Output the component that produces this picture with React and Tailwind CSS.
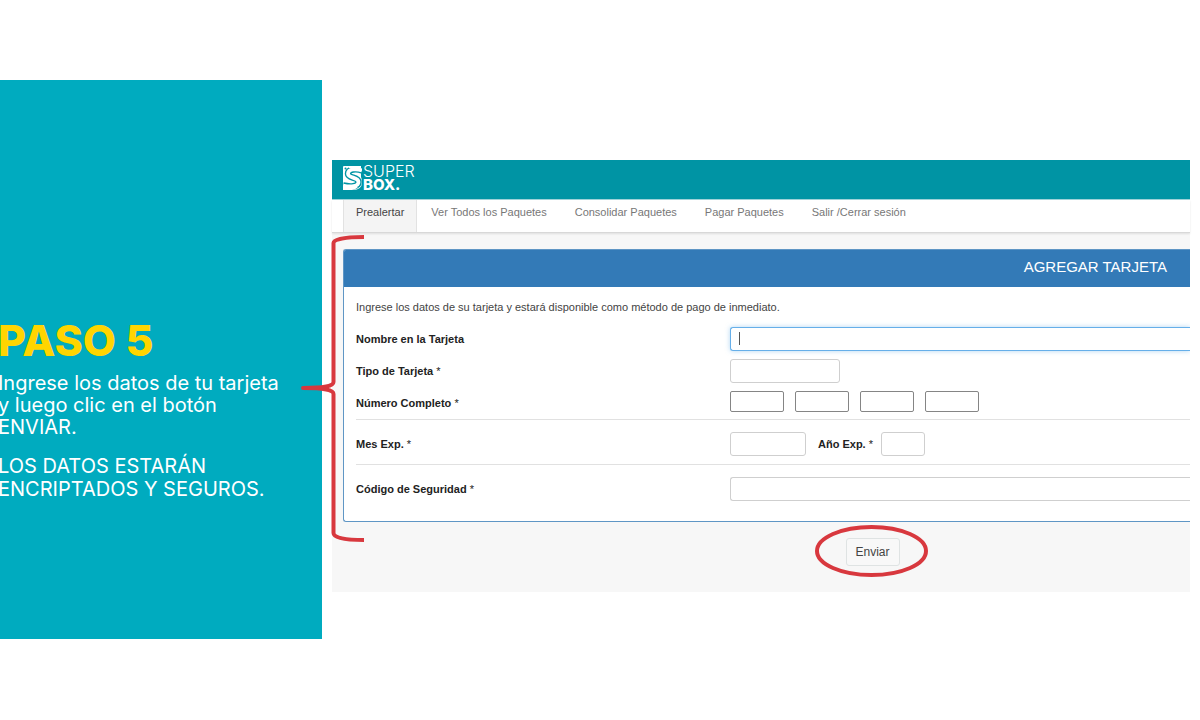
import { useState } from "react";

const navItems = [
  "Prealertar",
  "Ver Todos los Paquetes",
  "Consolidar Paquetes",
  "Pagar Paquetes",
  "Salir /Cerrar sesión",
];

const fieldClass = "h-6 rounded-[3px] border border-[#cfcfcf] bg-white px-2 outline-none";

const logoCurve = "M19 5.500C14 3.500 5 3.500 5 8.800C5 13.500 15.500 11.800 15.500 17C15.500 22 7 22 0 20.500";

function Logo() {
  return (
    <a href="#" aria-label="Super Box" className="flex gap-px text-white">
      <svg width="19" height="26" viewBox="0 0 19 26" fill="none" aria-hidden="true">
        <path d="M0 2Q0 1 1 1H18V12Q19 14 19 17Q19 25 10 25H0Z" fill="#fff" />
        <path d={logoCurve} stroke="#0094a4" strokeWidth="6.500" />
        <path d={logoCurve} stroke="#fff" strokeWidth="3.800" />
        <path d="M6 1H18V3H6ZM0 22H15Q12 25 9 25H0Z" fill="#fff" />
        <circle cx="2.500" cy="3.500" r="1" fill="#0094a4" />
      </svg>
      <span className="flex flex-col font-['Inter',sans-serif] leading-[13px]">
        <span className="text-[16px] font-light">SUPER</span>
        <span className="text-[15px] font-extrabold">BOX.</span>
      </span>
    </a>
  );
}

function Label({ htmlFor, required, children }) {
  return (
    <label htmlFor={htmlFor} className="font-bold text-[#222]">
      {children}
      {required && <span className="font-normal"> *</span>}
    </label>
  );
}

function Bracket() {
  return (
    <svg
      className="absolute top-[74px] -left-8 pointer-events-none"
      width="66"
      height="310"
      viewBox="0 0 66 310"
      fill="none"
      stroke="#d8383e"
      strokeWidth="4"
      aria-hidden="true"
    >
      <path d="M64 3C46 3 33.500 5 33.500 9V148C33.500 152 24 154 3 154C24 154 33.500 156 33.500 160V299C33.500 304 46 306 64 306" />
      <path d="M3 154H18" strokeLinecap="round" />
    </svg>
  );
}

function Sidebar() {
  return (
    <aside className="w-[322px] shrink-0 bg-[#00abbf] pt-[236px] pb-[138px] font-['Inter',sans-serif] text-white">
      <div className="-ml-[2px]">
        <h1 className="text-[43px] leading-[48px] font-extrabold text-[#ffd500]">PASO 5</h1>
        <p className="mt-2 text-[20px] leading-[22px]">
          Ingrese los datos de tu tarjeta
          <br />y luego clic en el botón
          <br />
          ENVIAR.
        </p>
        <p className="mt-[17px] text-[20px] leading-[23px]">
          LOS DATOS ESTARÁN
          <br />
          ENCRIPTADOS Y SEGUROS.
        </p>
      </div>
    </aside>
  );
}

function CardForm() {
  const [nombre, setNombre] = useState("");

  return (
    <form className="pt-4 pl-[11px]" onSubmit={(e) => e.preventDefault()}>
      <div className="overflow-hidden rounded-l-[3px] border border-r-0 border-[#5f96c5] bg-white">
        <h2 className="bg-[#337ab7] pt-[6px] pr-[23px] pb-[10px] text-right text-[15px] leading-[21px] text-white">
          AGREGAR TARJETA
        </h2>
        <div className="pt-3 pb-5 pl-3">
          <p className="text-[#444]">
            Ingrese los datos de su tarjeta y estará disponible como método de pago de inmediato.
          </p>
          <div className="mt-3 grid grid-cols-[374px_1fr] items-center gap-y-2">
            <Label htmlFor="nombre">Nombre en la Tarjeta</Label>
            <div className="relative flex">
              <input
                id="nombre"
                value={nombre}
                onChange={(e) => setNombre(e.target.value)}
                className="h-6 grow rounded-l-[3px] border border-r-0 border-[#66afe9] bg-white px-2 shadow-[0_0_5px_#66afe980] outline-none"
              />
              <span className="absolute top-[5px] left-[9px] h-[13px] w-px bg-[#555]" />
            </div>
            <Label htmlFor="tipo" required>Tipo de Tarjeta</Label>
            <select id="tipo" className={`${fieldClass} w-[110px] appearance-none`}>
              <option></option>
            </select>
            <Label htmlFor="numero1" required>Número Completo</Label>
            <div className="flex h-6 items-start gap-[11px]">
              {[1, 2, 3, 4].map((n) => (
                <input
                  key={n}
                  id={`numero${n}`}
                  aria-label={`Número Completo ${n}`}
                  maxLength={4}
                  className="h-[21px] w-[54px] rounded-[2px] border border-[#858585] bg-white px-1 outline-none"
                />
              ))}
            </div>
          </div>
          <div className="mt-1 grid grid-cols-[374px_1fr] items-center border-y border-[#e1e1e1] pt-3 pb-2">
            <Label htmlFor="mes" required>Mes Exp.</Label>
            <div className="flex items-center">
              <select id="mes" className={`${fieldClass} mr-3 w-[76px] appearance-none`}>
                <option></option>
              </select>
              <Label htmlFor="anio" required>Año Exp.</Label>
              <select id="anio" className={`${fieldClass} ml-2 w-11 appearance-none`}>
                <option></option>
              </select>
            </div>
          </div>
          <div className="mt-3 grid grid-cols-[374px_1fr] items-center">
            <Label htmlFor="codigo" required>Código de Seguridad</Label>
            <input
              id="codigo"
              className="h-6 rounded-l-[3px] border border-r-0 border-[#cfcfcf] bg-white px-2 outline-none"
            />
          </div>
        </div>
      </div>
      <div className="flex justify-center pt-4 pb-[26px] pl-[212px]">
        <div className="relative">
          <button
            type="submit"
            className="h-7 w-[54px] rounded-[3px] border border-[#dfe3e3] bg-[#f8f8f8] text-[12px] text-[#444]"
          >
            Enviar
          </button>
          <svg
            className="absolute -top-[13px] -left-[31px] pointer-events-none"
            width="114"
            height="52"
            viewBox="0 0 114 52"
            fill="none"
            aria-hidden="true"
          >
            <ellipse cx="56.500" cy="26" rx="54.500" ry="24" stroke="#d8383e" strokeWidth="4" />
          </svg>
        </div>
      </div>
    </form>
  );
}

function App() {
  return (
    <main className="flex min-h-screen items-start overflow-hidden bg-white py-20">
      <Sidebar />
      <section className="relative mx-[10px] mt-20 min-w-0 grow bg-[#f7f7f7] font-['Liberation_Sans',sans-serif] text-[11px] leading-4">
        <header className="border-b border-[#9fd3d9] bg-[#0094a4] px-[11px] pt-[5px] pb-2">
          <Logo />
        </header>
        <nav className="flex border-b border-[#d8d8d8] bg-white pl-[11px] shadow-[0_1px_2px_#0000001a]">
          {navItems.map((item, i) => (
            <a
              key={item}
              href="#"
              className={
                i === 0
                  ? "border-x border-[#e2e2e2] bg-[#f4f4f4] px-3 pt-1 pb-3 text-[#444]"
                  : "px-[14px] pt-1 pb-3 text-[#777]"
              }
            >
              {item}
            </a>
          ))}
        </nav>
        <CardForm />
        <Bracket />
      </section>
    </main>
  );
}

export default App;
